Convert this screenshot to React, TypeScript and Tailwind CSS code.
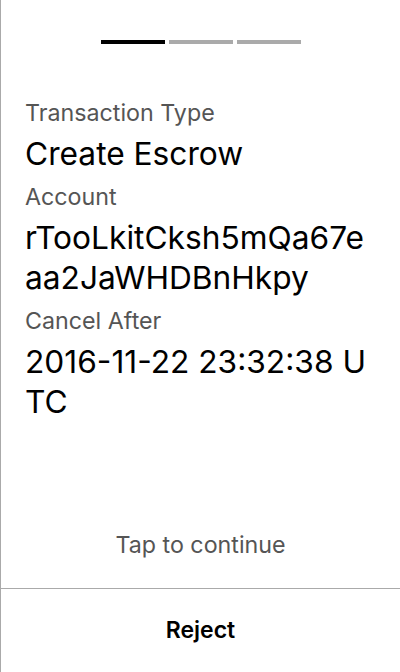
export default function App() {
  const fields = [
    { label: 'Transaction Type', value: 'Create Escrow' },
    { label: 'Account', value: 'rTooLkitCksh5mQa67eaa2JaWHDBnHkpy' },
    { label: 'Cancel After', value: '2016-11-22 23:32:38 UTC' },
  ]

  return (
    <div className="flex h-[672px] w-[400px] flex-col border-l border-[#aaaaaa] bg-white font-['Inter',sans-serif]">
      <div className="flex justify-center gap-1 pt-10">
        <div className="h-1 w-16 bg-black" />
        <div className="h-1 w-16 bg-[#aaaaaa]" />
        <div className="h-1 w-16 bg-[#aaaaaa]" />
      </div>
      <div className="flex flex-1 flex-col px-6 pt-[55px]">
        {fields.map((f) => (
          <div key={f.label} className="flex flex-col">
            <span className="text-[23.25px] leading-[28px] text-[#555555]">{f.label}</span>
            <span className="mt-[7px] mb-[9px] break-all text-[31.7px] leading-[40px] text-black">{f.value}</span>
          </div>
        ))}
      </div>
      <div className="pb-[29px] text-center text-[23.25px] leading-[28px] text-[#555555]">Tap to continue</div>
      <div className="border-t border-[#aaaaaa]" />
      <button className="h-[83px] text-center text-[23px] font-semibold text-black">Reject</button>
    </div>
  )
}
